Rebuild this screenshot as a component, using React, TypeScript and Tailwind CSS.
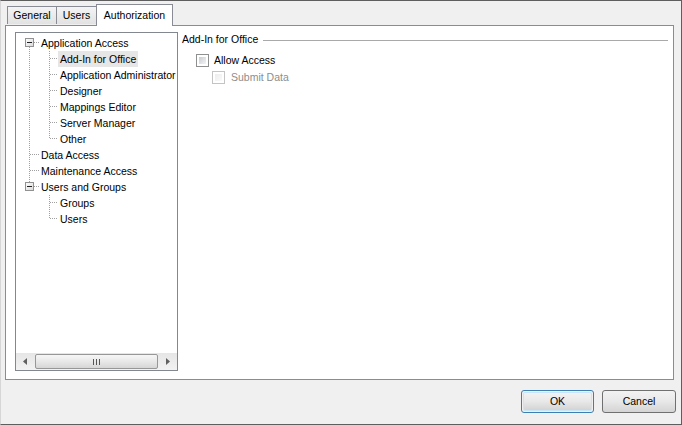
import React from 'react';

type TreeRow = {
  label: string;
  level: 0 | 1;
  box?: boolean;
  up?: boolean;
  down?: boolean;
  through?: boolean;
  last?: boolean;
  selected?: boolean;
};

const rows: TreeRow[] = [
  { label: 'Application Access', level: 0, box: true, down: true },
  { label: 'Add-In for Office', level: 1, through: true, selected: true },
  { label: 'Application Administrator', level: 1, through: true },
  { label: 'Designer', level: 1, through: true },
  { label: 'Mappings Editor', level: 1, through: true },
  { label: 'Server Manager', level: 1, through: true },
  { label: 'Other', level: 1, through: true, last: true },
  { label: 'Data Access', level: 0, up: true, down: true },
  { label: 'Maintenance Access', level: 0, up: true, down: true },
  { label: 'Users and Groups', level: 0, box: true, up: true },
  { label: 'Groups', level: 1 },
  { label: 'Users', level: 1, last: true },
];

const dot = { stroke: '#a0a0a0', strokeWidth: 1, strokeDasharray: '1 1' };

function Gutter({ row }: { row: TreeRow }) {
  if (row.level === 0) {
    return (
      <svg width="23" height="16" className="shrink-0">
        <defs>
          <linearGradient id="pm" x1="0" y1="0" x2="1" y2="1">
            <stop offset="0" stopColor="#ffffff" />
            <stop offset="1" stopColor="#d8d8d8" />
          </linearGradient>
        </defs>
        {row.up && <line x1="13.5" y1="0" x2="13.5" y2={row.box ? 3 : 8} {...dot} />}
        {row.down && <line x1="13.5" y1={row.box ? 12 : 8} x2="13.5" y2="16" {...dot} />}
        <line x1={row.box ? 18 : 14} y1="7.5" x2="23" y2="7.5" {...dot} />
        {row.box && (
          <g>
            <rect x="9.5" y="3.5" width="8" height="8" fill="url(#pm)" stroke="#919191" />
            <line x1="11" y1="7.5" x2="16" y2="7.5" stroke="#202020" />
          </g>
        )}
      </svg>
    );
  }
  return (
    <svg width="42" height="16" className="shrink-0">
      {row.through && <line x1="13.5" y1="0" x2="13.5" y2="16" {...dot} />}
      <line x1="33.5" y1="0" x2="33.5" y2={row.last ? 8 : 16} {...dot} />
      <line x1="34" y1="7.5" x2="42" y2="7.5" {...dot} />
    </svg>
  );
}

function Checkbox({ disabled }: { disabled?: boolean }) {
  return (
    <div
      className={
        'w-[13px] h-[13px] shrink-0 border p-[2px] bg-white ' +
        (disabled ? 'border-[#c4c4c4]' : 'border-[#8e8f8f]')
      }
    >
      <div
        className={
          'w-full h-full bg-linear-to-br ' +
          (disabled ? 'from-[#ececec] to-[#fafafa]' : 'from-[#c8ccd0] to-[#f4f4f4]')
        }
      />
    </div>
  );
}

export default function App() {
  return (
    <div className="w-[682px] h-[425px] bg-[#f0f0f0] border border-[#5e5e5e] border-l-[#d6d6d6] font-['Liberation_Sans',Arial,sans-serif] text-[10.5px] text-black flex flex-col overflow-hidden">
      {/* tabs */}
      <div className="ml-[4px] h-[24px] pl-[2px] flex items-end relative z-10">
        <div className="w-[50px] h-[18px] mb-px border border-b-0 border-[#898c95] bg-linear-to-b from-[#f4f4f4] to-[#e2e2e2] flex items-center justify-center pt-px">
          General
        </div>
        <div className="w-[41px] h-[18px] mb-px -ml-px border border-b-0 border-[#898c95] bg-linear-to-b from-[#f4f4f4] to-[#e2e2e2] flex items-center justify-center pt-px">
          Users
        </div>
        <div className="w-[77px] h-[22px] -mb-px -ml-px border border-b-0 border-[#898c95] bg-white flex items-start justify-center pt-[3px]">
          Authorization
        </div>
      </div>

      {/* tab page */}
      <div className="ml-[4px] w-[669px] h-[355px] border border-[#898c95] bg-white flex pl-[9px] pt-[6px]">
        <div className="w-[163px] h-[339px] border border-[#828790] flex flex-col overflow-hidden">
          <div className="flex-1 pt-[2px]">
            {rows.map((row) => (
              <div key={row.label} className="flex h-[16px] items-center">
                <Gutter row={row} />
                <span
                  className={
                    'px-[2px] leading-[16px] h-[16px] whitespace-nowrap ' +
                    (row.selected ? 'bg-[#e6e6e6]' : '')
                  }
                >
                  {row.label}
                </span>
              </div>
            ))}
          </div>
          {/* horizontal scrollbar */}
          <div className="h-[17px] flex items-stretch bg-linear-to-b from-[#e6e6e6] to-[#f2f2f2]">
            <div className="w-[18px] flex items-center justify-center">
              <svg width="4" height="7">
                <path d="M4 0 L0 3.5 L4 7 Z" fill="#606060" />
              </svg>
            </div>
            <div className="flex-1 mx-px my-[1px] rounded-[2px] border border-[#979797] bg-linear-to-b from-[#f6f6f6] via-[#e8e8e8] to-[#d6d6d6] flex items-center justify-center">
              <svg width="7" height="6">
                <line x1="0.5" y1="0" x2="0.5" y2="6" stroke="#555" />
                <line x1="3.5" y1="0" x2="3.5" y2="6" stroke="#555" />
                <line x1="6.5" y1="0" x2="6.5" y2="6" stroke="#555" />
              </svg>
            </div>
            <div className="w-[18px] flex items-center justify-center">
              <svg width="4" height="7">
                <path d="M0 0 L4 3.5 L0 7 Z" fill="#606060" />
              </svg>
            </div>
          </div>
        </div>

        {/* details */}
        <div className="flex-1 pl-[4px] pr-[5px] pt-px">
          <div className="flex items-center h-[14px]">
            <span className="whitespace-nowrap">Add-In for Office</span>
            <div className="flex-1 ml-[5px] h-px bg-[#a9a9a9]" />
          </div>
          <div className="flex items-center h-[13px] mt-[7px] ml-[14px]">
            <Checkbox />
            <span className="ml-[5px]">Allow Access</span>
          </div>
          <div className="flex items-center h-[13px] mt-[4px] ml-[30px]">
            <Checkbox disabled />
            <span className="ml-[6px] text-[#8d8d8d]">Submit Data</span>
          </div>
        </div>
      </div>

      {/* buttons */}
      <div className="flex justify-end gap-[8px] mt-[10px] pr-[5px]">
        <div className="w-[73px] h-[23px] rounded-[3px] border border-[#3c7fb1] p-px">
          <div className="w-full h-full rounded-[2px] border border-[#c8e6f8] bg-linear-to-b from-[#f2f2f2] via-[#e8e8e8] to-[#d4d4d4] flex items-center justify-center">
            OK
          </div>
        </div>
        <div className="w-[74px] h-[23px] rounded-[3px] border border-[#707070] bg-linear-to-b from-[#f2f2f2] via-[#e8e8e8] to-[#d4d4d4] flex items-center justify-center">
          Cancel
        </div>
      </div>
    </div>
  );
}
